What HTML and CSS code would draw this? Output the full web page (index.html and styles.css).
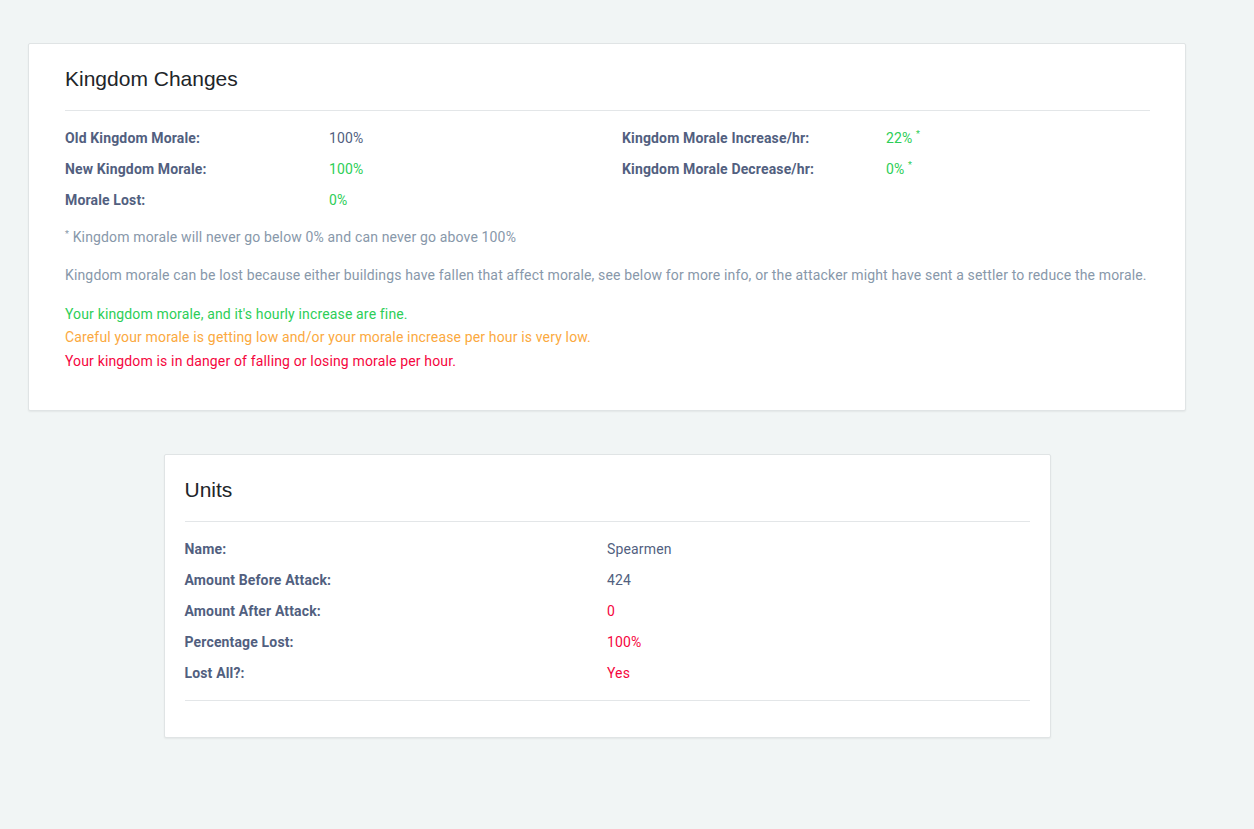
FILE: index.html
```html
<!DOCTYPE html>
<html>
<head>
<meta charset="utf-8">
<link rel="stylesheet" href="styles.css">
</head>
<body>
<div class="page">
  <section class="card card-wide">
    <h2 class="card-title">Kingdom Changes</h2>
    <hr class="rule">
    <div class="stats">
      <div class="label">Old Kingdom Morale:</div>
      <div class="value">100%</div>
      <div class="label">Kingdom Morale Increase/hr:</div>
      <div class="value good">22% <sup>*</sup></div>
      <div class="label">New Kingdom Morale:</div>
      <div class="value good">100%</div>
      <div class="label">Kingdom Morale Decrease/hr:</div>
      <div class="value good">0% <sup>*</sup></div>
      <div class="label">Morale Lost:</div>
      <div class="value good">0%</div>
    </div>
    <p class="note"><sup>*</sup> Kingdom morale will never go below 0% and can never go above 100%</p>
    <p class="muted">Kingdom morale can be lost because either buildings have fallen that affect morale, see below for more info, or the attacker might have sent a settler to reduce the morale.</p>
    <div class="legend">
      <div class="good">Your kingdom morale, and it's hourly increase are fine.</div>
      <div class="warn">Careful your morale is getting low and/or your morale increase per hour is very low.</div>
      <div class="bad">Your kingdom is in danger of falling or losing morale per hour.</div>
    </div>
  </section>

  <section class="card card-units">
    <h2 class="card-title">Units</h2>
    <hr class="rule">
    <div class="units">
      <div class="label">Name:</div>
      <div class="value">Spearmen</div>
      <div class="label">Amount Before Attack:</div>
      <div class="value">424</div>
      <div class="label">Amount After Attack:</div>
      <div class="value bad">0</div>
      <div class="label">Percentage Lost:</div>
      <div class="value bad">100%</div>
      <div class="label">Lost All?:</div>
      <div class="value bad">Yes</div>
    </div>
    <hr class="rule rule-bottom">
  </section>
</div>
</body>
</html>
```

FILE: styles.css
```css
* { box-sizing: border-box; }
html, body {
  margin: 0;
  padding: 0;
  background: #f1f5f5;
}
body {
  font-family: Roboto, "Liberation Sans", Arial, sans-serif;
  font-size: 14px;
  letter-spacing: 0.15px;
  color: #525f7f;
}
.page {
  width: 1158px;
  margin-left: 28px;
  padding-top: 43px;
  padding-bottom: 92px;
}
.card {
  background: #fff;
  border: 1px solid #e0e4e5;
  border-radius: 2px;
  box-shadow: 0 1px 2px rgba(0, 0, 0, 0.06);
}
.card-wide {
  padding: 22px 35px 37px 36px;
}
.card-units {
  width: 887px;
  margin: 43px auto 0;
  padding: 22px 20px 36px 20px;
}
.card-title {
  margin: 0;
  font-family: "Liberation Sans", Arial, sans-serif;
  font-weight: 400;
  font-size: 21px;
  line-height: 25px;
  letter-spacing: 0;
  color: #212529;
}
.rule {
  border: 0;
  border-top: 1px solid #e3e6e8;
  margin: 19px 0 12px;
  height: 0;
}
.rule-bottom {
  margin: 11px 0 0;
}
.stats {
  display: grid;
  grid-template-columns: 264px 293px 264px 1fr;
}
.units {
  display: grid;
  grid-template-columns: 1fr 1fr;
}
.label, .value {
  line-height: 21px;
  padding: 5px 0;
}
.label {
  font-weight: 700;
  color: #525f7f;
}
.value {
  color: #525f7f;
}
sup {
  font-size: 9px;
  vertical-align: top;
  position: relative;
  top: -4px;
}
.note {
  margin: 11px 0 0;
  line-height: 21px;
  color: #8898aa;
}
.note sup {
  top: -3px;
}
.muted {
  margin: 17px 0 0;
  line-height: 21px;
  color: #8898aa;
}
.legend {
  margin-top: 16.5px;
  line-height: 23.5px;
}
.good, .value.good { color: #2dce57; }
.warn { color: #fba940; }
.bad, .value.bad { color: #f5063e; }
```
